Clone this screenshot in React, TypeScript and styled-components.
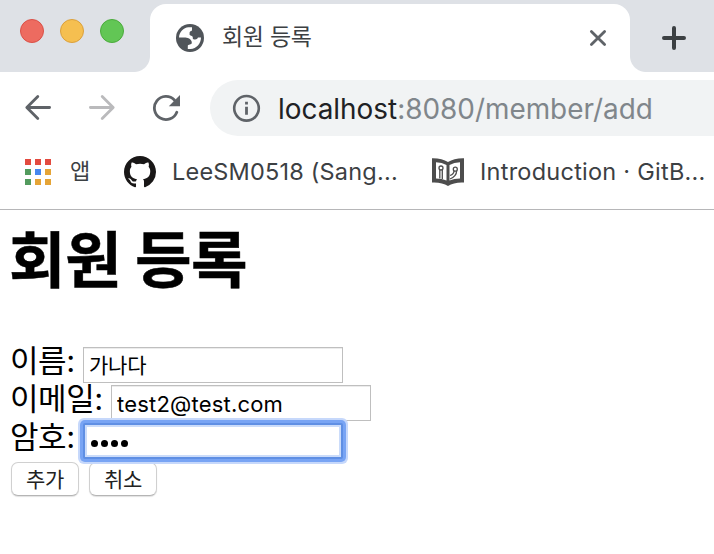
import React from 'react';
import styled, { createGlobalStyle } from 'styled-components';

const GlobalStyle = createGlobalStyle`
  * { box-sizing: border-box; }
  html, body { margin: 0; padding: 0; background: #fff; overflow: hidden; }
  body { font-family: Inter, "Noto Sans CJK KR", sans-serif; }
  svg { display: block; flex: none; }
`;

const Window = styled.div`
  width: 714px;
  height: 554px;
  background: #fff;
  overflow: hidden;
`;

const TabStrip = styled.header`
  display: flex;
  height: 72px;
  padding-top: 4px;
  background: #dee1e6;
`;

const TrafficLights = styled.div`
  display: flex;
  gap: 16px;
  width: 150px;
  padding: 15px 0 0 20px;
`;

const Light = styled.span<{ $fill: string; $edge: string }>`
  width: 24px;
  height: 24px;
  border-radius: 50%;
  border: 1px solid ${p => p.$edge};
  background: ${p => p.$fill};
`;

const Tab = styled.div`
  position: relative;
  display: flex;
  align-items: center;
  width: 480px;
  height: 68px;
  padding: 0 22px 0 26px;
  border-radius: 16px 16px 0 0;
  background: #fff;
  &::before, &::after {
    content: "";
    position: absolute;
    bottom: 0;
    width: 16px;
    height: 16px;
  }
  &::before { left: -16px; background: radial-gradient(circle at 0 0, transparent 15.5px, #fff 16.5px); }
  &::after { right: -16px; background: radial-gradient(circle at 100% 0, transparent 15.5px, #fff 16.5px); }
`;

const Label = styled.span<{ $size: number; $spacing?: number; $color?: string; $shift?: number }>`
  font-size: ${p => p.$size}px;
  line-height: 32px;
  letter-spacing: ${p => p.$spacing ?? 0}px;
  color: ${p => p.$color ?? '#3c4043'};
  margin-top: ${p => p.$shift ?? 0}px;
  white-space: nowrap;
`;

const TabTop = styled.div`
  display: flex;
  align-items: center;
  width: 100%;
  height: 68px;
  gap: 18px;
  > svg:last-child { margin-left: auto; }
`;

const NewTab = styled.div`
  padding: 22px 0 0 32px;
`;

const Toolbar = styled.nav`
  display: flex;
  height: 72px;
  padding: 8px 0 8px 24px;
`;

const NavIcons = styled.div`
  display: flex;
  align-items: center;
  gap: 36px;
  width: 186px;
`;

const AddressBar = styled.div`
  display: flex;
  align-items: center;
  flex: 1;
  height: 56px;
  padding-left: 22px;
  gap: 17px;
  border-radius: 28px 0 0 28px;
  background: #f1f3f4;
`;

const Path = styled.span`
  color: #80868b;
`;

const Bookmarks = styled.nav`
  display: flex;
  height: 66px;
  padding: 12px 0 0 25px;
  border-bottom: 1px solid #b6b6b8;
`;

const Bookmark = styled.div<{ $width?: number; $gap: number }>`
  display: flex;
  align-items: center;
  height: 32px;
  gap: ${p => p.$gap}px;
  flex: none;
  width: ${p => (p.$width ? `${p.$width}px` : 'auto')};
`;

const AppsGrid = styled.div`
  display: grid;
  grid-template-columns: repeat(3, 6px);
  grid-auto-rows: 6px;
  gap: 4px;
`;

const Dot = styled.i<{ $color: string }>`
  background: ${p => p.$color};
`;

const Page = styled.main`
  padding: 7px 0 0 10px;
  color: #000;
`;

const Heading = styled.h1`
  margin: 0;
  height: 125px;
  font: 700 61.5px/80px "Noto Sans CJK KR", sans-serif;
  letter-spacing: -0.4px;
  text-indent: -1px;
  -webkit-text-stroke: 0.5px #000;
  white-space: nowrap;
`;

const Field = styled.label`
  display: flex;
  height: 38px;
`;

const Caption = styled.span<{ $width: number }>`
  flex: none;
  width: ${p => p.$width}px;
  font: 400 31px/38px Inter, "Noto Sans CJK KR", sans-serif;
  letter-spacing: -0.4px;
  white-space: nowrap;
`;

const Input = styled.input<{ $size: number; $spacing?: number; $lift?: number }>`
  width: 260px;
  height: 36px;
  margin: 5px 0 0;
  padding: 1px 4px ${p => p.$lift ?? 0}px 5px;
  border: 1px solid #bfbfbf;
  border-radius: 0;
  box-shadow: inset 0 1px 0 #ececec;
  background: #fff;
  color: #000;
  outline: none;
  font: 400 ${p => p.$size}px Inter, "Noto Sans CJK KR", sans-serif;
  letter-spacing: ${p => p.$spacing ?? 0}px;
`;

const FocusedBox = styled.div`
  display: flex;
  align-items: center;
  gap: 3.2px;
  position: relative;
  width: 260px;
  height: 36px;
  margin-top: 5px;
  padding: 5px 0 0 5.5px;
  border: 2px solid #5f8fe4;
  background: #fff;
  box-shadow: inset 0 0 0 2px #cbdcfa, 0 0 0 3px #78a4f4, 0 0 0 5px #c6d8fb;
  border-radius: 2px;
`;

const Bullet = styled.i`
  width: 7px;
  height: 7px;
  border-radius: 50%;
  background: #000;
`;

const Buttons = styled.div`
  display: flex;
  gap: 10px;
  padding: 6px 0 0 1px;
`;

const Button = styled.button`
  width: 68px;
  height: 34px;
  padding: 0 0 2px;
  border: 1px solid #d0d0d0;
  border-bottom-color: #b5b5b5;
  border-radius: 7px;
  background: #fff;
  box-shadow: 0 1px 1px rgba(0, 0, 0, 0.12);
  color: #222;
  font: 400 21px/30px "Noto Sans CJK KR", sans-serif;
  letter-spacing: -0.4px;
`;

const Globe = () => (
  <svg width="28" height="28" viewBox="0 0 28 28">
    <circle cx="14" cy="14" r="14" fill="#50555a" />
    <path d="M3 13.6C3.2 8 7.5 3.7 12.5 3.2H16V6C16 7.3 13.6 6.8 13.6 8.8V10.8C13.6 12 16.8 11.2 16.8 13.6V14.4C16.8 15.6 20 16 21.2 14.8L22 13.6H25C25 19.5 20.5 25 14.5 25H11.8V21.8C11.8 20.2 15.8 21.2 15.8 18.8C15.8 14.8 11 13.6 8.4 13.6Z" fill="#fff" />
  </svg>
);

const Close = () => (
  <svg width="20" height="20" viewBox="0 0 20 20" stroke="#5f6368" strokeWidth="2.8" strokeLinecap="round">
    <path d="M3.4 3.4L16.6 16.6M16.6 3.4L3.4 16.6" />
  </svg>
);

const Plus = () => (
  <svg width="24" height="24" viewBox="0 0 24 24" stroke="#3c4043" strokeWidth="4" strokeLinecap="round">
    <path d="M2 12H22M12 2V22" />
  </svg>
);

const Arrow = ({ forward }: { forward?: boolean }) => (
  <svg width="28" height="28" viewBox="0 0 28 28" fill="none" stroke={forward ? '#bababc' : '#5f6368'} strokeWidth="2.8" strokeLinecap="round" strokeLinejoin="round">
    {forward ? <path d="M2.4 13.5H25M14.2 2.5L25.2 13.5L14.2 24.5" /> : <path d="M25.6 13.5H3M13.8 2.5L2.8 13.5L13.8 24.5" />}
  </svg>
);

const Reload = () => (
  <svg width="28" height="28" viewBox="0 0 28 28">
    <path d="M24.8 18.2A11.6 11.6 0 1 1 22.4 6" fill="none" stroke="#5f6368" strokeWidth="2.8" strokeLinecap="round" />
    <path d="M28 1V12.2H16.8Z" fill="#5f6368" />
  </svg>
);

const Info = () => (
  <svg width="29" height="28" viewBox="0 0 29 28">
    <circle cx="14.5" cy="14.3" r="12.3" fill="none" stroke="#5f6368" strokeWidth="2.6" />
    <path d="M13.1 7.8h2.8v2.8h-2.8zM13.1 12.8h2.8v8h-2.8z" fill="#5f6368" />
  </svg>
);

const GitHub = () => (
  <svg width="32" height="32" viewBox="0 0 16 16" fill="#191717">
    <path d="M8 0C3.58 0 0 3.58 0 8c0 3.54 2.29 6.53 5.47 7.59.4.07.55-.17.55-.38 0-.19-.01-.82-.01-1.49-2.01.37-2.53-.49-2.69-.94-.09-.23-.48-.94-.82-1.13-.28-.15-.68-.52-.01-.53.63-.01 1.08.58 1.23.82.72 1.21 1.87.87 2.33.66.07-.52.28-.87.51-1.07-1.78-.2-3.64-.89-3.64-3.95 0-.87.31-1.59.82-2.15-.08-.2-.36-1.02.08-2.12 0 0 .67-.21 2.2.82.64-.18 1.32-.27 2-.27s1.36.09 2 .27c1.53-1.04 2.2-.82 2.2-.82.44 1.1.16 1.92.08 2.12.51.56.82 1.27.82 2.15 0 3.07-1.87 3.75-3.65 3.95.29.25.54.73.54 1.48 0 1.07-.01 1.93-.01 2.2 0 .21.15.46.55.38A8.01 8.01 0 0 0 16 8c0-4.42-3.58-8-8-8z" />
  </svg>
);

const Book = () => (
  <svg width="32" height="28" viewBox="0 0 32 28">
    <path d="M0 .2Q10 0 16 4Q22 0 32 .2V24.5Q22 24 16 28Q10 24 0 24.5Z" fill="#4d4d4d" />
    <path d="M4 4.2Q10 4.2 14.5 7V22.6Q10 20.4 4 20.4ZM28 4.2Q22 4.2 17.5 7V22.6Q22 20.4 28 20.4Z" fill="#fff" />
    <g fill="none" stroke="#4d4d4d" strokeWidth="1.3">
      <circle cx="9" cy="10" r="2" />
      <path d="M7.8 12V20.5M10.3 12V21" />
      <circle cx="23.3" cy="11.2" r="2" />
      <path d="M22 13Q22 16 18 17.5M24.6 13Q24.6 18 18 21" />
    </g>
  </svg>
);

const appColors = ['#e34a3f', '#e34a3f', '#e34a3f', '#539b5e', '#4688ef', '#e5a436', '#539b5e', '#e5a436', '#e5a436'];

export default function App() {
  return (
    <Window>
      <GlobalStyle />
      <TabStrip>
        <TrafficLights>
          <Light $fill="#ed6b60" $edge="#da5047" />
          <Light $fill="#f5bf50" $edge="#dba03c" />
          <Light $fill="#62c655" $edge="#4bab3c" />
        </TrafficLights>
        <Tab>
          <TabTop>
            <Globe />
            <Label $size={23} $spacing={-0.3} $shift={-2}>회원 등록</Label>
            <Close />
          </TabTop>
        </Tab>
        <NewTab><Plus /></NewTab>
      </TabStrip>
      <Toolbar>
        <NavIcons>
          <Arrow />
          <Arrow forward />
          <Reload />
        </NavIcons>
        <AddressBar>
          <Info />
          <Label $size={27.9} $color="#202124" $shift={1}>localhost<Path>:8080/member/add</Path></Label>
        </AddressBar>
      </Toolbar>
      <Bookmarks>
        <Bookmark $width={99} $gap={19}>
          <AppsGrid>{appColors.map((c, i) => <Dot key={i} $color={c} />)}</AppsGrid>
          <Label $size={22} $shift={-2}>앱</Label>
        </Bookmark>
        <Bookmark $width={308} $gap={16}>
          <GitHub />
          <Label $size={23.5} $spacing={0.2}>LeeSM0518 (Sang...</Label>
        </Bookmark>
        <Bookmark $gap={16}>
          <Book />
          <Label $size={23.5} $spacing={0.25}>Introduction · GitB...</Label>
        </Bookmark>
      </Bookmarks>
      <Page>
        <Heading>회원 등록</Heading>
        <Field>
          <Caption $width={73}>이름:</Caption>
          <Input defaultValue="가나다" $size={21} $spacing={-0.2} $lift={4} />
        </Field>
        <Field>
          <Caption $width={101}>이메일:</Caption>
          <Input defaultValue="test2@test.com" $size={22} $spacing={0.2} />
        </Field>
        <Field>
          <Caption $width={73}>암호:</Caption>
          <FocusedBox><Bullet /><Bullet /><Bullet /><Bullet /></FocusedBox>
        </Field>
        <Buttons>
          <Button>추가</Button>
          <Button>취소</Button>
        </Buttons>
      </Page>
    </Window>
  );
}
